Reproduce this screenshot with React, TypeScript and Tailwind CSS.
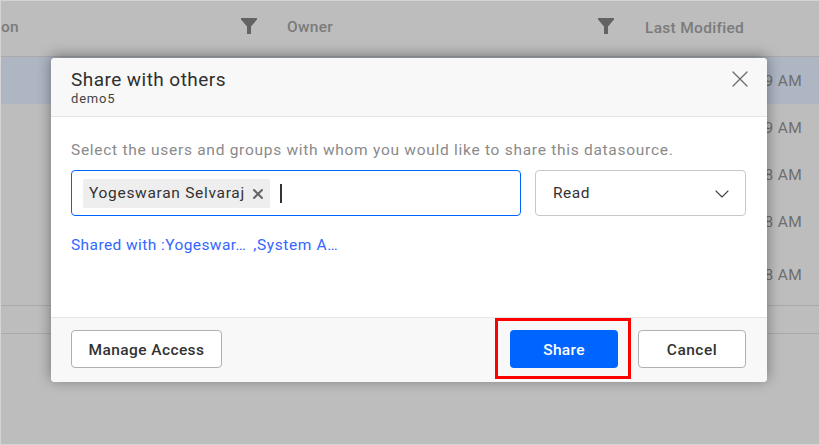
import { ChevronDown, X } from "lucide-react";

const times = [
  { t: "9 AM", cls: "h-[47px] bg-[#aeb5c3]" },
  { t: "9 AM", cls: "h-[47px]" },
  { t: "8 AM", cls: "h-[47px]" },
  { t: "8 AM", cls: "h-[47px]" },
  { t: "8 AM", cls: "h-[60px]" },
];

function Funnel({ className }: { className: string }) {
  return (
    <svg viewBox="0 0 16 16" className={className} fill="#636363">
      <path d="M0 0h16v1.5L10 8.5V16H6V8.5L0 1.5z" />
    </svg>
  );
}

function Table() {
  return (
    <div className="h-[445px] w-[820px] border border-[#d4d4d4] bg-[#bdbdbd]">
      <div className="flex h-[56px] items-center border-b border-[#a9a9a9] pb-[2px] text-[15.5px] font-medium tracking-[0.3px] text-[#7b7b7b]">
        <span className="w-[240px]">on</span>
        <Funnel className="mb-[4px] h-[16px] w-[16px]" />
        <span className="ml-[30px] w-[311px]">Owner</span>
        <Funnel className="mb-[4px] h-[16px] w-[16px]" />
        <span className="ml-[31px] mt-[2px]">Last Modified</span>
      </div>
      {times.map((row, i) => (
        <div
          key={i}
          className={`flex items-center justify-end pr-[17px] pt-[2px] text-[15.5px] tracking-[0.3px] text-[#6f6f6f] ${row.cls}`}
        >
          {row.t}
        </div>
      ))}
      <div className="h-[29px] border-y border-[#a9a9a9]" />
    </div>
  );
}

function ShareDialog() {
  return (
    <div className="absolute left-[51px] top-[58px] flex h-[324px] w-[716px] flex-col rounded-[4px] bg-white shadow-[0_-2px_14px_rgba(0,0,0,0.4)]">
      <div className="flex h-[59px] items-start justify-between rounded-t-[4px] border-b border-[#e5e5e5] bg-[#f8f8f8] pl-[20px] pr-[13px]">
        <div>
          <div className="mt-[9px] text-[19px] leading-[26px] font-normal tracking-[0.45px] text-[#2f2f2f]">
            Share with others
          </div>
          <div className="-mt-[1px] text-[13px] leading-[14px] tracking-[0.8px] text-[#444]">demo5</div>
        </div>
        <X className="mt-[7px] h-[28px] w-[28px] text-[#6e6e6e]" strokeWidth={1.2} />
      </div>
      <div className="flex flex-1 flex-col px-[20px] pt-[23px]">
        <div className="text-[15.5px] leading-[20px] tracking-[0.72px] text-[#8a8a8a]">
          Select the users and groups with whom you would like to share this datasource.
        </div>
        <div className="mt-[10px] flex gap-[14px]">
          <div className="flex h-[46px] w-[450px] items-center rounded-[4px] border border-[#0065ff] pl-[11px]">
            <div className="flex h-[29px] items-center rounded-[2px] bg-[#eeeeee] pl-[6px] pr-[4px] pt-[1px] text-[15.5px] tracking-[0.7px] text-[#333]">
              Yogeswaran Selvaraj
              <X className="ml-[5px] h-[16px] w-[16px] text-[#666]" strokeWidth={3} />
            </div>
            <div className="ml-[10px] h-[19px] w-[2px] bg-[#333]" />
          </div>
          <div className="flex h-[46px] w-[211px] items-center justify-between rounded-[4px] border border-[#c8c8c8] pl-[17px] pr-[11px] pt-[1px] text-[15.5px] tracking-[0.5px] text-[#333]">
            Read
            <ChevronDown className="h-[24px] w-[24px] text-[#444]" strokeWidth={1.1} />
          </div>
        </div>
        <div className="mt-[19px] flex gap-[7px] text-[15.5px] leading-[20px] tracking-[0.42px] text-[#3366ff]">
          <span>Shared with :Yogeswar…</span>
          <span className="tracking-[0.6px]">,System A…</span>
        </div>
      </div>
      <div className="flex h-[65px] items-center justify-between rounded-b-[4px] border-t border-[#e5e5e5] bg-[#f8f8f8] pb-[2px] pl-[20px] pr-[21px]">
        <button className="h-[38px] w-[151px] rounded-[4px] border border-[#b0b0b0] bg-white pt-[3px] text-[15.5px] font-medium tracking-[0.4px] text-[#333]">
          Manage Access
        </button>
        <div className="flex gap-[20px]">
          <div className="relative">
            <button className="h-[38px] w-[108px] rounded-[4px] bg-[#0065ff] pt-[3px] text-[15.5px] font-medium tracking-[0.3px] text-white">
              Share
            </button>
            <div className="absolute -left-[15px] -top-[12px] h-[61px] w-[136px] border-[3px] border-[#ff0000]" />
          </div>
          <button className="h-[38px] w-[108px] rounded-[4px] border border-[#b0b0b0] bg-white pt-[3px] text-[15.5px] font-medium tracking-[0.5px] text-[#333]">
            Cancel
          </button>
        </div>
      </div>
    </div>
  );
}

export default function App() {
  return (
    <div className="relative h-[445px] w-[820px] overflow-hidden font-['Roboto',sans-serif]">
      <Table />
      <ShareDialog />
    </div>
  );
}
